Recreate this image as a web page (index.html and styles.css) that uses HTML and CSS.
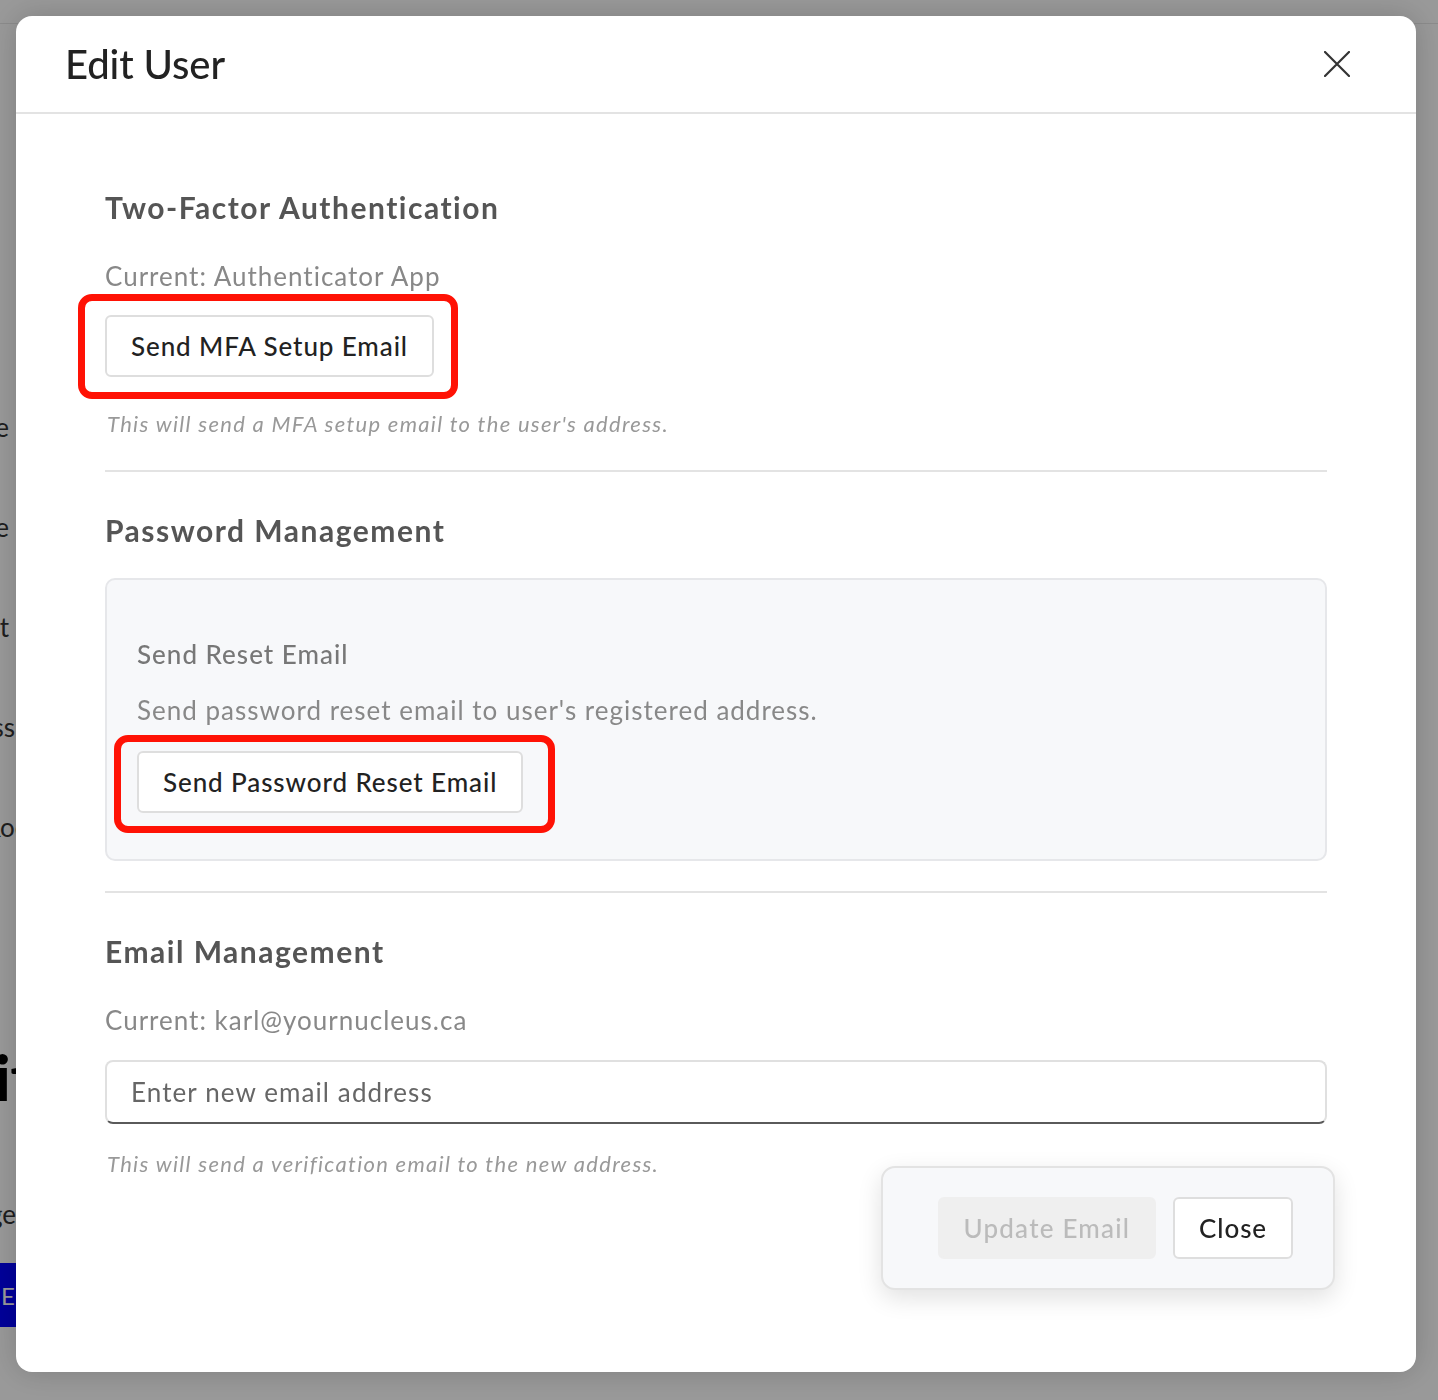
FILE: index.html
```html
<!DOCTYPE html>
<html lang="en">
<head>
  <meta charset="UTF-8" />
  <meta name="viewport" content="width=device-width, initial-scale=1.0" />
  <title>Edit User</title>
  <link rel="stylesheet" href="styles.css">
</head>
<body>
  <!-- page underneath the dialog -->
  <div class="page">
    <div class="page-top"></div>
    <ul class="page-list">
      <li>Name</li>
      <li>Phone</li>
      <li>Account</li>
      <li class="mid">Address</li>
      <li class="wide">Room</li>
    </ul>
    <div class="page-title">Edit</div>
    <div class="page-note">Manage</div>
    <div class="page-btn">EDIT</div>
  </div>

  <div class="overlay">
    <div class="modal">
      <div class="modal-head">
        <h1>Edit User</h1>
        <button class="close-x" aria-label="Close">
          <svg width="26" height="26" viewBox="0 0 26 26" fill="none" stroke="#333" stroke-width="2.2" stroke-linecap="round">
            <path d="M1 1 L25 25 M25 1 L1 25" />
          </svg>
        </button>
      </div>

      <div class="modal-body">
        <section class="block">
          <h2>Two-Factor Authentication</h2>
          <p class="current">Current: Authenticator App</p>
          <span class="mark mark-mfa"><button class="btn">Send MFA Setup Email</button></span>
          <p class="hint">This will send a MFA setup email to the user's address.</p>
        </section>

        <hr class="divider">

        <section class="block">
          <h2>Password Management</h2>
          <div class="panel">
            <h3>Send Reset Email</h3>
            <p class="panel-text">Send password reset email to user's registered address.</p>
            <span class="mark mark-reset"><button class="btn">Send Password Reset Email</button></span>
          </div>
        </section>

        <hr class="divider divider-low">

        <section class="block block-email">
          <h2>Email Management</h2>
          <p class="current">Current: karl@yournucleus.ca</p>
          <input class="field" type="email" placeholder="Enter new email address">
          <p class="hint hint-email">This will send a verification email to the new address.</p>
        </section>
      </div>

      <div class="modal-foot">
        <button class="btn btn-muted" disabled>Update Email</button>
        <button class="btn">Close</button>
      </div>
    </div>
  </div>
</body>
</html>
```

FILE: styles.css
```css
* { box-sizing: border-box; }
body { margin: 0; width: 1438px; height: 1400px; overflow: hidden; font-family: Lato, "Open Sans", Arial, sans-serif; background: #fff; }

/* background page */
.page { height: 1400px; background: #fff; color: #333; }
.page-top { height: 24px; border-bottom: 1px solid #e8e8e8; }
.page-list { list-style: none; margin: 0; padding: 353px 0 0; width: 9px; }
.page-list li { height: 100px; display: flex; align-items: center; justify-content: flex-end; white-space: nowrap; font-size: 26px; }
.page-list li.mid { width: 15px; }
.page-list li.wide { width: 51px; }
.page-title { width: 34px; height: 120px; margin-top: 140px; display: flex; justify-content: flex-end; align-items: center; white-space: nowrap; font-size: 62px; font-weight: 900; color: #000; }
.page-note { width: 16px; height: 50px; margin-top: 52px; display: flex; justify-content: flex-end; align-items: center; white-space: nowrap; font-size: 26px; }
.page-btn { width: 60px; height: 64px; margin-top: 24px; background: #0000ff; color: #fff; font-size: 24px; display: flex; align-items: center; padding-left: 1px; }

.overlay { position: fixed; inset: 0; background: rgba(0,0,0,0.4); padding: 16px 22px 28px 16px; }

/* dialog */
.modal { position: relative; height: 100%; background: #fff; border-radius: 16px; box-shadow: 0 0 30px rgba(0,0,0,0.18); overflow: hidden; }
.modal-head { height: 98px; display: flex; align-items: center; justify-content: space-between; padding: 0 66px 0 49px; border-bottom: 2px solid #e3e3e3; }
.modal-head h1 { margin: 0; font-size: 40px; font-weight: 500; color: #222; letter-spacing: -0.1px; }
.close-x { border: 0; background: none; padding: 0; width: 26px; height: 26px; cursor: pointer; }

.modal-body { padding: 75px 89px 0; }
.block h2 { margin: 0; font-size: 30px; line-height: 36px; font-weight: 700; color: #555; letter-spacing: 1.5px; }
.current { margin: 35px 0 0; font-size: 26px; line-height: 32px; color: #888; letter-spacing: 1px; }
.hint { margin: 33px 0 0 2px; font-size: 22px; line-height: 28px; font-style: italic; color: #999; letter-spacing: 1.3px; }

.btn { font-family: inherit; font-size: 26px; line-height: 32px; font-weight: 500; color: #222; background: #fff; border: 2px solid #dedede; border-radius: 6px; padding: 13px 24px; letter-spacing: 0.9px; }
.btn-muted { background: #efefef; border-color: #efefef; color: #bbb; letter-spacing: 1.2px; }

/* red call-out rings */
.mark { position: relative; display: inline-block; margin-top: 23px; }
.mark::after { content: ""; position: absolute; border: 7px solid #ff1205; border-radius: 14px; pointer-events: none; }
.mark .btn { display: block; }
.mark-mfa::after { top: -21px; left: -27px; right: -24px; bottom: -22px; }
.mark-reset { margin-top: 25px; }
.mark-reset::after { top: -16px; left: -23px; right: -32px; bottom: -20px; }

.divider { margin: 32px 0 40px; border: 0; border-top: 2px solid #e3e3e3; }
.divider-low { margin: 30px 0 40px; }

.panel { margin-top: 30px; background: #f7f8fa; border: 2px solid #e6e7ea; border-radius: 10px; padding: 58px 30px 46px; }
.panel h3 { margin: 0; font-size: 26px; line-height: 32px; font-weight: 500; color: #777; letter-spacing: 1px; }
.panel-text { margin: 24px 0 0; font-size: 26px; line-height: 32px; color: #888; letter-spacing: 1px; }

.block-email .current { margin-top: 35px; }
.field { display: block; width: 100%; margin-top: 24px; height: 64px; padding: 0 24px; font-family: inherit; font-size: 26px; letter-spacing: 1.1px; color: #222; border: 2px solid #e0e0e0; border-bottom-color: #5a5a5a; border-radius: 8px; background: #fff; }
.field::placeholder { color: #666; }
.hint-email { margin-top: 26px; }

/* floating action bar */
.modal-foot { position: absolute; right: 81px; bottom: 82px; display: flex; gap: 17px; padding: 29px 40px 29px 55px; background: #f7f8fa; border: 2px solid #e3e3e3; border-radius: 14px; box-shadow: 0 8px 24px rgba(0,0,0,0.12); }
```
